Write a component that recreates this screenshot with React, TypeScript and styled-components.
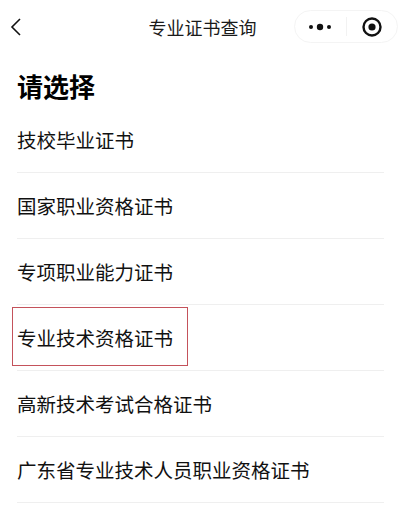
import styled, { createGlobalStyle } from "styled-components";

const GlobalStyle = createGlobalStyle`
  html, body {
    margin: 0;
    padding: 0;
    background: #fff;
  }
  body {
    font-family: "Noto Sans CJK SC", "Noto Sans", sans-serif;
    color: #111;
  }
`;

const CERTS = [
  "技校毕业证书",
  "国家职业资格证书",
  "专项职业能力证书",
  "专业技术资格证书",
  "高新技术考试合格证书",
  "广东省专业技术人员职业资格证书",
];

const MARKED = 3;

function App() {
  return (
    <Page>
      <GlobalStyle />
      <NavBar>
        <BackButton aria-label="back">
          <svg width="12" height="20" viewBox="0 0 12 20">
            <path d="M10 2 L2 10 L10 18" fill="none" stroke="#111" strokeWidth="1.6" />
          </svg>
        </BackButton>
        <NavTitle>专业证书查询</NavTitle>
        <Capsule>
          <CapsuleButton>
            <svg width="28" height="8" viewBox="0 0 28 8">
              <circle cx="5" cy="4" r="2" fill="#111" />
              <circle cx="14" cy="4" r="3.2" fill="#111" />
              <circle cx="23" cy="4" r="2" fill="#111" />
            </svg>
          </CapsuleButton>
          <CapsuleDivider />
          <CapsuleButton>
            <svg width="22" height="22" viewBox="0 0 22 22">
              <circle cx="11" cy="11" r="8.5" fill="none" stroke="#111" strokeWidth="2.4" />
              <circle cx="11" cy="11" r="3.6" fill="#111" />
            </svg>
          </CapsuleButton>
        </Capsule>
      </NavBar>
      <Content>
        <Heading>请选择</Heading>
        <List>
          {CERTS.map((name, i) => (
            <Row key={name}>
              {i === MARKED && <Mark />}
              <RowText>{name}</RowText>
            </Row>
          ))}
        </List>
      </Content>
    </Page>
  );
}

export default App;

const Page = styled.div`
  width: 405px;
  min-height: 507px;
  background: #fff;
`;

const NavBar = styled.header`
  position: relative;
  display: flex;
  align-items: center;
  justify-content: space-between;
  height: 53px;
  padding: 0 7px 0 10px;
  box-sizing: border-box;
`;

const BackButton = styled.div`
  display: flex;
  align-items: center;
  width: 20px;
  height: 30px;
  margin-top: 1px;
`;

const NavTitle = styled.div`
  position: absolute;
  left: 0;
  right: 0;
  top: 14px;
  text-align: center;
  font-size: 18px;
  line-height: 26px;
  color: #1a1a1a;
  pointer-events: none;
`;

const Capsule = styled.div`
  display: flex;
  align-items: center;
  width: 104px;
  height: 33px;
  border: 1px solid #f4f4f4;
  border-radius: 17px;
  box-sizing: border-box;
`;

const CapsuleButton = styled.div`
  flex: 1;
  display: flex;
  align-items: center;
  justify-content: center;
`;

const CapsuleDivider = styled.div`
  width: 1px;
  height: 19px;
  background: #f2f2f2;
`;

const Content = styled.main`
  padding: 0 21px 0 17px;
`;

const Heading = styled.h1`
  margin: 14px 0 0;
  padding-bottom: 2px;
  font-size: 26px;
  line-height: 38px;
  font-weight: 700;
  color: #000;
`;

const List = styled.div`
  display: flex;
  flex-direction: column;
`;

const Row = styled.div`
  position: relative;
  display: flex;
  align-items: center;
  height: 65px;
  border-bottom: 1px solid #efefef;
`;

const RowText = styled.span`
  font-size: 19.5px;
  line-height: 28px;
  color: #111;
`;

const Mark = styled.div`
  position: absolute;
  left: -5px;
  top: 2px;
  width: 176px;
  height: 59px;
  border: 1.5px solid #c4525b;
  box-sizing: border-box;
`;
